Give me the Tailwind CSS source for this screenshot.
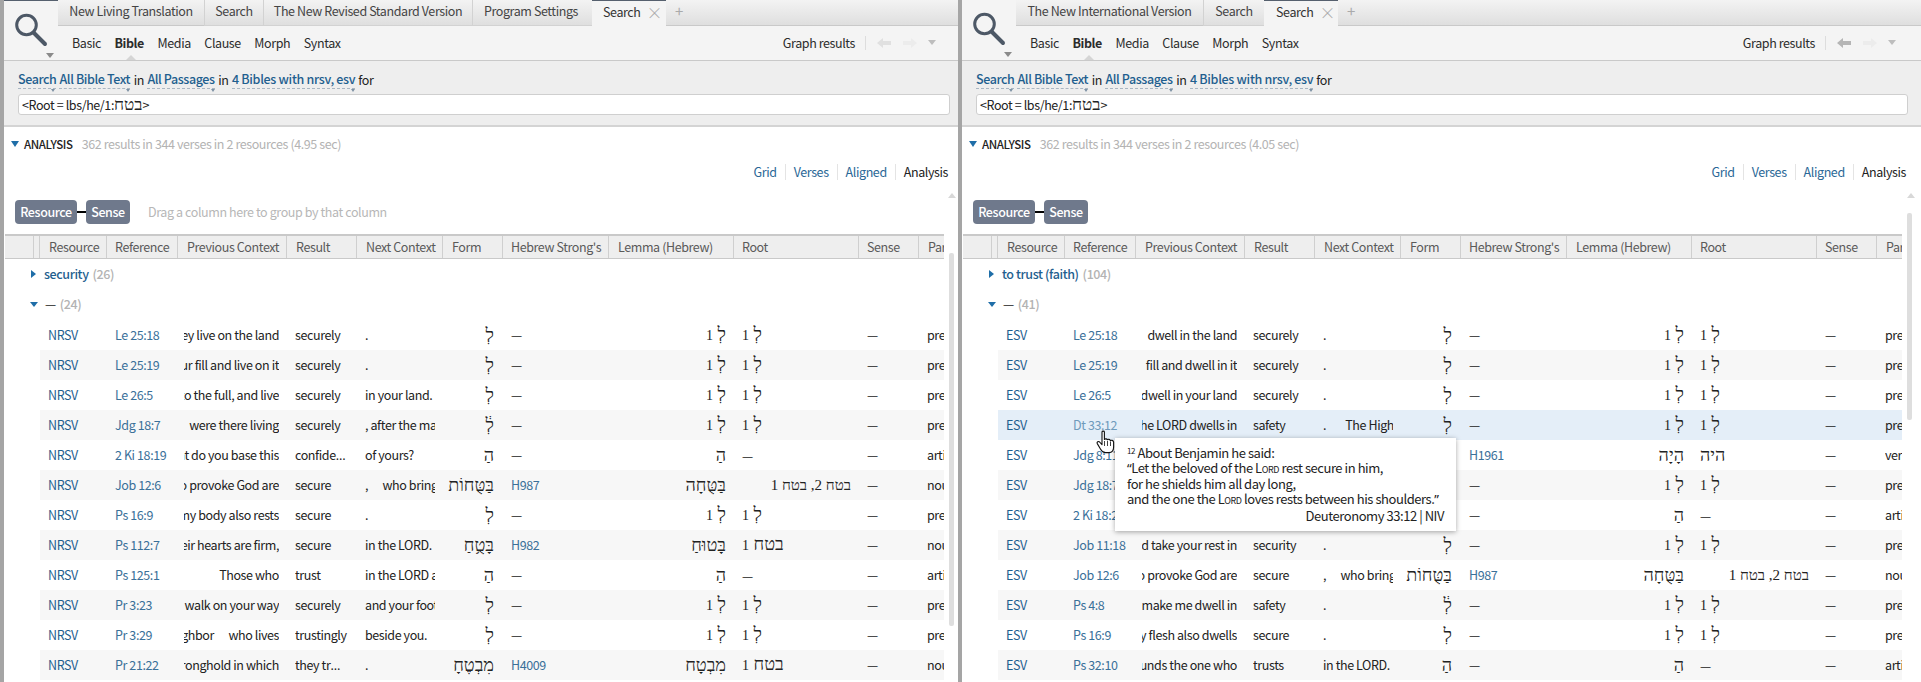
<!DOCTYPE html>
<html lang="en">
<head>
<meta charset="utf-8">
<title>Search</title>
<script src="https://cdn.jsdelivr.net/npm/@tailwindcss/browser@4"></script>
</head>
<body class="m-0 overflow-hidden bg-white font-['Noto_Sans_CJK_SC',sans-serif] text-[12.5px] leading-[18px] tracking-[-0.4px] text-[#222]">
<main class="relative grid h-[682px] w-[1921px] grid-cols-[958px_963px] overflow-hidden">

<!-- LEFT PANEL -->
<section class="relative h-[682px] overflow-hidden border-l-4 border-[#a5a5a5]">
  <header class="flex h-[61px] border-b border-[#c9c9c9] bg-[#f4f4f4]">
    <div class="relative w-[54px] shrink-0 border-t border-[#56606e]">
      <svg class="absolute left-[9px] top-[12px]" width="36" height="34" viewBox="0 0 36 34" fill="none" stroke="#4d5866"><circle cx="13.5" cy="12" r="9.8" stroke-width="3"/><path d="M20.5 19.5 L32 31" stroke-width="4" stroke-linecap="round"/></svg>
      <i class="absolute left-[42px] top-[52px] border-x-[4px] border-t-[5px] border-x-transparent border-t-[#8a8a8a]"></i>
    </div>
    <div class="flex min-w-0 flex-1 flex-col">
      <nav class="flex h-[26px] items-stretch bg-gradient-to-b from-[#f3f3f3] to-[#dedede] text-[#444]">
        <span class="flex w-[146px] items-center justify-center border-b border-[#c9c9c9] pb-[3px]">New Living Translation</span>
        <span class="flex w-[59px] items-center justify-center border-b border-l border-[#d2d2d2] pb-[3px]">Search</span>
        <span class="flex w-[209px] items-center justify-center border-b border-l border-[#d2d2d2] pb-[3px]">The New Revised Standard Version</span>
        <span class="flex w-[120px] items-center justify-center border-b border-l border-[#d2d2d2] pb-[3px] pr-[3px]">Program Settings</span>
        <span class="flex w-[74px] items-center gap-[6px] border-t border-[#56606e] bg-[#f4f4f4] pb-[3px] pl-[11px] text-[#333]">Search <span class="text-[16px] font-light text-[#a9a9a9]">×</span></span>
        <span class="flex flex-1 items-center border-b border-[#c9c9c9] pb-[3px] pl-[9px] text-[15px] text-[#aaa]">+</span>
      </nav>
      <div class="relative flex flex-1 items-center gap-[13.5px] pb-[1px] pl-[14px] pr-[22px] text-[#2c2c2c]">
        <span>Basic</span><span class="font-bold">Bible</span><span>Media</span><span>Clause</span><span>Morph</span><span>Syntax</span>
        <i class="absolute left-[68px] bottom-0 border-x-[5px] border-b-[5px] border-x-transparent border-b-[#d5d5d5]"></i>
        <span class="ml-auto">Graph results</span>
        <span class="ml-[-4px] h-[14px] border-l border-[#ddd]"></span>
        <svg class="ml-[-2px]" width="14" height="10" viewBox="0 0 14 10" fill="#e0e0e0"><path d="M0 5 L6 0 V3 H14 V7 H6 V10 Z"/></svg>
        <svg class="ml-[-2px]" width="14" height="10" viewBox="0 0 14 10" fill="#ececec"><path d="M14 5 L8 0 V3 H0 V7 H8 V10 Z"/></svg>
        <i class="ml-[-2px] border-x-[4px] border-t-[5px] border-x-transparent border-t-[#bdbdbd]"></i>
      </div>
    </div>
  </header>
  <div class="h-[66px] border-b-[2px] border-[#d4d4d4] bg-[#eeeeee] pl-[14px] pr-[8px]">
    <p class="flex h-[33px] items-end pb-[5px] text-[#222]">
      <a class="relative mr-[3px] border-b border-dashed border-[#a9b6c2] font-medium text-[#1f5f8f]">Search<i class="absolute -bottom-[4px] right-[1px] border-x-[2px] border-t-[3px] border-x-transparent border-t-[#7f93a5]"></i></a>
      <a class="relative border-b border-dashed border-[#a9b6c2] font-medium text-[#1f5f8f]">All Bible Text<i class="absolute -bottom-[4px] right-0 border-x-[2px] border-t-[3px] border-x-transparent border-t-[#7f93a5]"></i></a>
      <span class="mx-[3.5px]">in</span>
      <a class="relative border-b border-dashed border-[#a9b6c2] font-medium text-[#1f5f8f]">All Passages<i class="absolute -bottom-[4px] right-0 border-x-[2px] border-t-[3px] border-x-transparent border-t-[#7f93a5]"></i></a>
      <span class="mx-[3.5px]">in</span>
      <a class="relative border-b border-dashed border-[#a9b6c2] font-medium tracking-[-0.3px] text-[#1f5f8f]">4 Bibles with nrsv, esv<i class="absolute -bottom-[4px] right-0 border-x-[2px] border-t-[3px] border-x-transparent border-t-[#7f93a5]"></i></a>
      <span class="ml-[3px]">for</span>
    </p>
    <div class="flex h-[21px] items-center rounded-[3px] border border-[#cfcfcf] bg-white pl-[3px] text-[#222]">&lt;Root = lbs/he/1:<span class="font-['Liberation_Serif'] text-[17px] tracking-normal">בטח</span>&gt;</div>
  </div>
  <div class="flex h-[34px] items-center pl-[7px]">
    <i class="mr-[5px] border-x-[4px] border-t-[6px] border-x-transparent border-t-[#1f6ea8]"></i>
    <span class="text-[11.5px] font-medium">ANALYSIS</span>
    <span class="ml-[9px] text-[#b3b3b3]">362 results in 344 verses in 2 resources (4.95 sec)</span>
  </div>
  <div class="flex h-[22px] items-center justify-end gap-[8px] pr-[10px] text-[#2a6796]">
    <span>Grid</span><span class="h-[16px] border-l border-[#e4e4e4]"></span><span>Verses</span><span class="h-[16px] border-l border-[#e4e4e4]"></span><span>Aligned</span><span class="h-[16px] border-l border-[#e4e4e4]"></span><span class="text-[#222]">Analysis</span>
  </div>
  <div class="flex h-[51px] items-start pl-[11px] pt-[17px]">
    <span class="flex h-[24px] w-[62px] items-center justify-center rounded-[4px] bg-[#6f798c] font-medium text-white">Resource</span>
    <span class="mt-[11px] h-[2px] w-[9px] bg-black"></span>
    <span class="flex h-[24px] w-[44px] items-center justify-center rounded-[4px] bg-[#6f798c] font-medium text-white">Sense</span>
    <span class="ml-[18px] mt-[3px] text-[#b7b7b7]">Drag a column here to group by that column</span>
  </div>
  <div class="ml-px flex h-[25px] w-[939px] items-stretch border-t-[2px] border-b border-[#c9c9c9] bg-[#eeeeee] leading-[22px] text-[#5a5a5a]">
    <span class="w-[29px] border-r border-[#cfcfcf]"></span>
    <span class="w-[6px] border-r border-[#cfcfcf]"></span>
    <span class="w-[67px] border-r border-[#cfcfcf] pl-[9px]">Resource</span>
    <span class="w-[71px] border-r border-[#cfcfcf] pl-[8px]">Reference</span>
    <span class="w-[109px] border-r border-[#cfcfcf] pl-[9px]">Previous Context</span>
    <span class="w-[70px] border-r border-[#cfcfcf] pl-[9px]">Result</span>
    <span class="w-[86px] border-r border-[#cfcfcf] pl-[9px]">Next Context</span>
    <span class="w-[60px] border-r border-[#cfcfcf] pl-[9px]">Form</span>
    <span class="w-[106px] border-r border-[#cfcfcf] pl-[8px]">Hebrew Strong's</span>
    <span class="w-[125px] border-r border-[#cfcfcf] pl-[9px]">Lemma (Hebrew)</span>
    <span class="w-[125px] border-r border-[#cfcfcf] pl-[8px]">Root</span>
    <span class="w-[60px] border-r border-[#cfcfcf] pl-[8px]">Sense</span>
    <span class="w-[25px] overflow-hidden whitespace-nowrap pl-[9px]">Part</span>
  </div>
  <div class="flex h-[31px] items-center pb-[2px] pl-[27px]"><i class="mr-[8px] border-y-[4px] border-l-[5px] border-y-transparent border-l-[#1f6ea8]"></i><b class="font-medium text-[#1f5f8f]">security</b><span class="ml-[4px] font-medium text-[#b3b3b3]">(26)</span></div>
  <div class="flex h-[30px] items-center pb-[2px] pl-[26px]"><i class="mr-[7px] border-x-[4px] border-t-[5px] border-x-transparent border-t-[#1f6ea8]"></i><span>—</span><span class="ml-[4px] font-medium text-[#b3b3b3]">(24)</span></div>
  <div class="ml-[36px] w-[904px] [&>div]:grid [&>div]:h-[30px] [&>div]:grid-cols-[67px_71px_109px_70px_86px_60px_106px_125px_125px_60px_25px] [&>div]:items-center [&>div:nth-child(even)]:bg-[#f7f7f7] [&>div>div]:overflow-hidden [&>div>div]:whitespace-pre [&>div>div]:leading-[30px] [&>div>div]:ml-[8px] [&>div>div:nth-child(1)]:text-[#1f5f8f] [&>div>div:nth-child(2)]:text-[#3a7099] [&>div>div:nth-child(3)]:flex [&>div>div:nth-child(3)]:justify-end [&>div>div:nth-child(3)]:ml-[6px] [&>div>div:nth-child(3)]:mr-[8px] [&>div>div:nth-child(5)]:mr-[8px] [&>div>div:nth-child(6)]:ml-0 [&>div>div:nth-child(6)]:mr-[9px] [&>div>div:nth-child(6)]:font-['Liberation_Serif'] [&>div>div:nth-child(6)]:text-[18px] [&>div>div:nth-child(6)]:tracking-normal [&>div>div:nth-child(6)]:[direction:rtl] [&>div>div:nth-child(8)]:ml-0 [&>div>div:nth-child(8)]:mr-[8px] [&>div>div:nth-child(8)]:font-['Liberation_Serif'] [&>div>div:nth-child(8)]:text-[18px] [&>div>div:nth-child(8)]:tracking-normal [&>div>div:nth-child(8)]:[direction:rtl] [&>div>div:nth-child(9)]:mr-[8px] [&>div>div:nth-child(9)]:font-['Liberation_Serif'] [&>div>div:nth-child(9)]:text-[18px] [&>div>div:nth-child(9)]:tracking-normal [&>div>div:nth-child(9)]:text-left [&>div>div:nth-child(9)]:[direction:rtl]">
    <div><div>NRSV</div><div>Le 25:18</div><div>they live on the land</div><div>securely</div><div>.</div><div>לְ</div><div>—</div><div>לְ <small class="text-[14px]">1</small></div><div>לְ <small class="text-[14px]">1</small></div><div>—</div><div>preposition</div></div>
    <div><div>NRSV</div><div>Le 25:19</div><div>your fill and live on it</div><div>securely</div><div>.</div><div>לְ</div><div>—</div><div>לְ <small class="text-[14px]">1</small></div><div>לְ <small class="text-[14px]">1</small></div><div>—</div><div>preposition</div></div>
    <div><div>NRSV</div><div>Le 26:5</div><div>to the full, and live</div><div>securely</div><div>in your land.</div><div>לְ</div><div>—</div><div>לְ <small class="text-[14px]">1</small></div><div>לְ <small class="text-[14px]">1</small></div><div>—</div><div>preposition</div></div>
    <div><div>NRSV</div><div>Jdg 18:7</div><div>were there living</div><div>securely</div><div>, after the manner</div><div>לְ֔</div><div>—</div><div>לְ <small class="text-[14px]">1</small></div><div>לְ <small class="text-[14px]">1</small></div><div>—</div><div>preposition</div></div>
    <div><div>NRSV</div><div>2 Ki 18:19</div><div>what do you base this</div><div>confide<span class="font-['Noto_Sans']">…</span></div><div>of yours?</div><div>הַ</div><div>—</div><div>הַ</div><div><span class="font-['Noto_Sans_CJK_SC'] text-[12.5px]">—</span></div><div>—</div><div>article</div></div>
    <div><div>NRSV</div><div>Job 12:6</div><div>who provoke God are</div><div>secure</div><div>,      who bring</div><div>בַּטֻּחוֹת</div><div class="text-[#3a7099]">H987</div><div>בַּטֻּחָה</div><div class="!text-right !text-[15px]">בטח 2, בטח 1</div><div>—</div><div>noun</div></div>
    <div><div>NRSV</div><div>Ps 16:9</div><div>my body also rests</div><div>secure</div><div>.</div><div>לְ</div><div>—</div><div>לְ <small class="text-[14px]">1</small></div><div>לְ <small class="text-[14px]">1</small></div><div>—</div><div>preposition</div></div>
    <div><div>NRSV</div><div>Ps 112:7</div><div>their hearts are firm,</div><div>secure</div><div>in the LORD.</div><div>בָּטֻ֥חַ</div><div class="text-[#3a7099]">H982</div><div>בָּטוּחַ</div><div>בטח <small class="text-[14px]">1</small></div><div>—</div><div>noun</div></div>
    <div><div>NRSV</div><div>Ps 125:1</div><div>Those who</div><div>trust</div><div>in the LORD are</div><div>הַ</div><div>—</div><div>הַ</div><div><span class="font-['Noto_Sans_CJK_SC'] text-[12.5px]">—</span></div><div>—</div><div>article</div></div>
    <div><div>NRSV</div><div>Pr 3:23</div><div>walk on your way</div><div>securely</div><div>and your foot</div><div>לְ</div><div>—</div><div>לְ <small class="text-[14px]">1</small></div><div>לְ <small class="text-[14px]">1</small></div><div>—</div><div>preposition</div></div>
    <div><div>NRSV</div><div>Pr 3:29</div><div>neighbor      who lives</div><div>trustingly</div><div>beside you.</div><div>לְ</div><div>—</div><div>לְ <small class="text-[14px]">1</small></div><div>לְ <small class="text-[14px]">1</small></div><div>—</div><div>preposition</div></div>
    <div><div>NRSV</div><div>Pr 21:22</div><div>the stronghold in which</div><div>they tr<span class="font-['Noto_Sans']">…</span></div><div>.</div><div>מִבְטֶחָ</div><div class="text-[#3a7099]">H4009</div><div>מִבְטָח</div><div>בטח <small class="text-[14px]">1</small></div><div>—</div><div>noun</div></div>
  </div>
  <i class="absolute left-[944px] top-[193px] border-x-[4px] border-b-[5px] border-x-transparent border-b-[#d8d8d8]"></i>
  <span class="absolute left-[945px] top-[253px] h-[373px] w-[5px] rounded-[2px] bg-[#dedede]"></span>
</section>

<!-- RIGHT PANEL -->
<section class="relative h-[682px] overflow-hidden border-l-4 border-[#a5a5a5]">
  <header class="flex h-[61px] border-b border-[#c9c9c9] bg-[#f4f4f4]">
    <div class="relative w-[54px] shrink-0">
      <svg class="absolute left-[9px] top-[12px]" width="36" height="34" viewBox="0 0 36 34" fill="none" stroke="#4d5866"><circle cx="13.5" cy="12" r="9.8" stroke-width="3"/><path d="M20.5 19.5 L32 31" stroke-width="4" stroke-linecap="round"/></svg>
      <i class="absolute left-[42px] top-[52px] border-x-[4px] border-t-[5px] border-x-transparent border-t-[#8a8a8a]"></i>
    </div>
    <div class="flex min-w-0 flex-1 flex-col">
      <nav class="flex h-[26px] items-stretch bg-gradient-to-b from-[#f3f3f3] to-[#dedede] text-[#444]">
        <span class="flex w-[187px] items-center justify-center border-b border-[#c9c9c9] pb-[3px]">The New International Version</span>
        <span class="flex w-[61px] items-center justify-center border-b border-l border-[#d2d2d2] pb-[3px]">Search</span>
        <span class="flex w-[74px] items-center gap-[6px] border-t border-[#56606e] bg-[#f4f4f4] pb-[3px] pl-[12px] text-[#333]">Search <span class="text-[16px] font-light text-[#a9a9a9]">×</span></span>
        <span class="flex flex-1 items-center border-b border-[#c9c9c9] pb-[3px] pl-[9px] text-[15px] text-[#aaa]">+</span>
      </nav>
      <div class="relative flex flex-1 items-center gap-[13.5px] pb-[1px] pl-[14px] pr-[25px] text-[#2c2c2c]">
        <span>Basic</span><span class="font-bold">Bible</span><span>Media</span><span>Clause</span><span>Morph</span><span>Syntax</span>
        <i class="absolute left-[68px] bottom-0 border-x-[5px] border-b-[5px] border-x-transparent border-b-[#d5d5d5]"></i>
        <span class="ml-auto">Graph results</span>
        <span class="ml-[-4px] h-[14px] border-l border-[#ddd]"></span>
        <svg class="ml-[-2px]" width="14" height="10" viewBox="0 0 14 10" fill="#b5b5b5"><path d="M0 5 L6 0 V3 H14 V7 H6 V10 Z"/></svg>
        <svg class="ml-[-2px]" width="14" height="10" viewBox="0 0 14 10" fill="#ececec"><path d="M14 5 L8 0 V3 H0 V7 H8 V10 Z"/></svg>
        <i class="ml-[-2px] border-x-[4px] border-t-[5px] border-x-transparent border-t-[#bdbdbd]"></i>
      </div>
    </div>
  </header>
  <div class="h-[66px] border-b-[2px] border-[#d4d4d4] bg-[#eeeeee] pl-[14px] pr-[13px]">
    <p class="flex h-[33px] items-end pb-[5px] text-[#222]">
      <a class="relative mr-[3px] border-b border-dashed border-[#a9b6c2] font-medium text-[#1f5f8f]">Search<i class="absolute -bottom-[4px] right-[1px] border-x-[2px] border-t-[3px] border-x-transparent border-t-[#7f93a5]"></i></a>
      <a class="relative border-b border-dashed border-[#a9b6c2] font-medium text-[#1f5f8f]">All Bible Text<i class="absolute -bottom-[4px] right-0 border-x-[2px] border-t-[3px] border-x-transparent border-t-[#7f93a5]"></i></a>
      <span class="mx-[3.5px]">in</span>
      <a class="relative border-b border-dashed border-[#a9b6c2] font-medium text-[#1f5f8f]">All Passages<i class="absolute -bottom-[4px] right-0 border-x-[2px] border-t-[3px] border-x-transparent border-t-[#7f93a5]"></i></a>
      <span class="mx-[3.5px]">in</span>
      <a class="relative border-b border-dashed border-[#a9b6c2] font-medium tracking-[-0.3px] text-[#1f5f8f]">4 Bibles with nrsv, esv<i class="absolute -bottom-[4px] right-0 border-x-[2px] border-t-[3px] border-x-transparent border-t-[#7f93a5]"></i></a>
      <span class="ml-[3px]">for</span>
    </p>
    <div class="flex h-[21px] items-center rounded-[3px] border border-[#cfcfcf] bg-white pl-[3px] text-[#222]">&lt;Root = lbs/he/1:<span class="font-['Liberation_Serif'] text-[17px] tracking-normal">בטח</span>&gt;</div>
  </div>
  <div class="flex h-[34px] items-center pl-[7px]">
    <i class="mr-[5px] border-x-[4px] border-t-[6px] border-x-transparent border-t-[#1f6ea8]"></i>
    <span class="text-[11.5px] font-medium">ANALYSIS</span>
    <span class="ml-[9px] text-[#b3b3b3]">362 results in 344 verses in 2 resources (4.05 sec)</span>
  </div>
  <div class="flex h-[22px] items-center justify-end gap-[8px] pr-[15px] text-[#2a6796]">
    <span>Grid</span><span class="h-[16px] border-l border-[#e4e4e4]"></span><span>Verses</span><span class="h-[16px] border-l border-[#e4e4e4]"></span><span>Aligned</span><span class="h-[16px] border-l border-[#e4e4e4]"></span><span class="text-[#222]">Analysis</span>
  </div>
  <div class="flex h-[51px] items-start pl-[11px] pt-[17px]">
    <span class="flex h-[24px] w-[62px] items-center justify-center rounded-[4px] bg-[#6f798c] font-medium text-white">Resource</span>
    <span class="mt-[11px] h-[2px] w-[9px] bg-black"></span>
    <span class="flex h-[24px] w-[44px] items-center justify-center rounded-[4px] bg-[#6f798c] font-medium text-white">Sense</span>
  </div>
  <div class="ml-px flex h-[25px] w-[939px] items-stretch border-t-[2px] border-b border-[#c9c9c9] bg-[#eeeeee] leading-[22px] text-[#5a5a5a]">
    <span class="w-[29px] border-r border-[#cfcfcf]"></span>
    <span class="w-[6px] border-r border-[#cfcfcf]"></span>
    <span class="w-[67px] border-r border-[#cfcfcf] pl-[9px]">Resource</span>
    <span class="w-[71px] border-r border-[#cfcfcf] pl-[8px]">Reference</span>
    <span class="w-[109px] border-r border-[#cfcfcf] pl-[9px]">Previous Context</span>
    <span class="w-[70px] border-r border-[#cfcfcf] pl-[9px]">Result</span>
    <span class="w-[86px] border-r border-[#cfcfcf] pl-[9px]">Next Context</span>
    <span class="w-[60px] border-r border-[#cfcfcf] pl-[9px]">Form</span>
    <span class="w-[106px] border-r border-[#cfcfcf] pl-[8px]">Hebrew Strong's</span>
    <span class="w-[125px] border-r border-[#cfcfcf] pl-[9px]">Lemma (Hebrew)</span>
    <span class="w-[125px] border-r border-[#cfcfcf] pl-[8px]">Root</span>
    <span class="w-[60px] border-r border-[#cfcfcf] pl-[8px]">Sense</span>
    <span class="w-[25px] overflow-hidden whitespace-nowrap pl-[9px]">Part</span>
  </div>
  <div class="flex h-[31px] items-center pb-[2px] pl-[27px]"><i class="mr-[8px] border-y-[4px] border-l-[5px] border-y-transparent border-l-[#1f6ea8]"></i><b class="font-medium text-[#1f5f8f]">to trust (faith)</b><span class="ml-[4px] font-medium text-[#b3b3b3]">(104)</span></div>
  <div class="flex h-[30px] items-center pb-[2px] pl-[26px]"><i class="mr-[7px] border-x-[4px] border-t-[5px] border-x-transparent border-t-[#1f6ea8]"></i><span>—</span><span class="ml-[4px] font-medium text-[#b3b3b3]">(41)</span></div>
  <div class="ml-[36px] w-[904px] [&>div]:grid [&>div]:h-[30px] [&>div]:grid-cols-[67px_71px_109px_70px_86px_60px_106px_125px_125px_60px_25px] [&>div]:items-center [&>div:nth-child(even)]:bg-[#f7f7f7] [&>div>div]:overflow-hidden [&>div>div]:whitespace-pre [&>div>div]:leading-[30px] [&>div>div]:ml-[8px] [&>div>div:nth-child(1)]:text-[#1f5f8f] [&>div>div:nth-child(2)]:text-[#3a7099] [&>div>div:nth-child(3)]:flex [&>div>div:nth-child(3)]:justify-end [&>div>div:nth-child(3)]:ml-[6px] [&>div>div:nth-child(3)]:mr-[8px] [&>div>div:nth-child(5)]:mr-[8px] [&>div>div:nth-child(6)]:ml-0 [&>div>div:nth-child(6)]:mr-[9px] [&>div>div:nth-child(6)]:font-['Liberation_Serif'] [&>div>div:nth-child(6)]:text-[18px] [&>div>div:nth-child(6)]:tracking-normal [&>div>div:nth-child(6)]:[direction:rtl] [&>div>div:nth-child(8)]:ml-0 [&>div>div:nth-child(8)]:mr-[8px] [&>div>div:nth-child(8)]:font-['Liberation_Serif'] [&>div>div:nth-child(8)]:text-[18px] [&>div>div:nth-child(8)]:tracking-normal [&>div>div:nth-child(8)]:[direction:rtl] [&>div>div:nth-child(9)]:mr-[8px] [&>div>div:nth-child(9)]:font-['Liberation_Serif'] [&>div>div:nth-child(9)]:text-[18px] [&>div>div:nth-child(9)]:tracking-normal [&>div>div:nth-child(9)]:text-left [&>div>div:nth-child(9)]:[direction:rtl]">
    <div><div>ESV</div><div>Le 25:18</div><div>dwell in the land</div><div>securely</div><div>.</div><div>לְ</div><div>—</div><div>לְ <small class="text-[14px]">1</small></div><div>לְ <small class="text-[14px]">1</small></div><div>—</div><div>preposition</div></div>
    <div><div>ESV</div><div>Le 25:19</div><div>fill and dwell in it</div><div>securely</div><div>.</div><div>לְ</div><div>—</div><div>לְ <small class="text-[14px]">1</small></div><div>לְ <small class="text-[14px]">1</small></div><div>—</div><div>preposition</div></div>
    <div><div>ESV</div><div>Le 26:5</div><div>and dwell in your land</div><div>securely</div><div>.</div><div>לְ</div><div>—</div><div>לְ <small class="text-[14px]">1</small></div><div>לְ <small class="text-[14px]">1</small></div><div>—</div><div>preposition</div></div>
    <div class="!bg-[#e4eef8]"><div>ESV</div><div class="!text-[#6f9abb]">Dt 33:12</div><div>the LORD dwells in</div><div>safety</div><div>.        The High</div><div>לְ</div><div>—</div><div>לְ <small class="text-[14px]">1</small></div><div>לְ <small class="text-[14px]">1</small></div><div>—</div><div>preposition</div></div>
    <div><div>ESV</div><div>Jdg 8:11</div><div></div><div></div><div></div><div></div><div class="text-[#3a7099]">H1961</div><div>הָיָה</div><div>היה</div><div>—</div><div>verb</div></div>
    <div><div>ESV</div><div>Jdg 18:7</div><div></div><div></div><div></div><div></div><div>—</div><div>לְ <small class="text-[14px]">1</small></div><div>לְ <small class="text-[14px]">1</small></div><div>—</div><div>preposition</div></div>
    <div><div>ESV</div><div>2 Ki 18:20</div><div></div><div></div><div></div><div></div><div>—</div><div>הַ</div><div><span class="font-['Noto_Sans_CJK_SC'] text-[12.5px]">—</span></div><div>—</div><div>article</div></div>
    <div><div>ESV</div><div>Job 11:18</div><div>and take your rest in</div><div>security</div><div>.</div><div>לְ</div><div>—</div><div>לְ <small class="text-[14px]">1</small></div><div>לְ <small class="text-[14px]">1</small></div><div>—</div><div>preposition</div></div>
    <div><div>ESV</div><div>Job 12:6</div><div>who provoke God are</div><div>secure</div><div>,      who bring</div><div>בַּטֻּחוֹת</div><div class="text-[#3a7099]">H987</div><div>בַּטֻּחָה</div><div class="!text-right !text-[15px]">בטח 2, בטח 1</div><div>—</div><div>noun</div></div>
    <div><div>ESV</div><div>Ps 4:8</div><div>make me dwell in</div><div>safety</div><div>.</div><div>לְ֔</div><div>—</div><div>לְ <small class="text-[14px]">1</small></div><div>לְ <small class="text-[14px]">1</small></div><div>—</div><div>preposition</div></div>
    <div><div>ESV</div><div>Ps 16:9</div><div>my flesh also dwells</div><div>secure</div><div>.</div><div>לְ</div><div>—</div><div>לְ <small class="text-[14px]">1</small></div><div>לְ <small class="text-[14px]">1</small></div><div>—</div><div>preposition</div></div>
    <div><div>ESV</div><div>Ps 32:10</div><div>surrounds the one who</div><div>trusts</div><div>in the LORD.</div><div>הַ</div><div>—</div><div>הַ</div><div><span class="font-['Noto_Sans_CJK_SC'] text-[12.5px]">—</span></div><div>—</div><div>article</div></div>
  </div>
  <i class="absolute left-[945px] top-[193px] border-x-[4px] border-b-[5px] border-x-transparent border-b-[#d8d8d8]"></i>
  <span class="absolute left-[945px] top-[213px] h-[207px] w-[5px] rounded-[2px] bg-[#dedede]"></span>
  <div class="absolute left-[153px] top-[438px] h-[93px] w-[341px] bg-white pl-[12px] pr-[12px] pt-[7px] text-[13px] leading-[15px] tracking-[-0.45px] text-[#222] shadow-[0_1px_5px_rgba(0,0,0,0.35)]">
    <p><sup class="text-[8px]">12</sup> About Benjamin he said:</p>
    <p><span class="font-['Noto_Sans']">“</span>Let the beloved of the <span class="[font-variant:small-caps]">Lord</span> rest secure in him,</p>
    <p>for he shields him all day long,</p>
    <p>and the one the <span class="[font-variant:small-caps]">Lord</span> loves rests between his shoulders.<span class="font-['Noto_Sans']">”</span></p>
    <p class="mt-px text-right">Deuteronomy 33:12 | NIV</p>
  </div>
  <svg class="absolute left-[134px] top-[430px]" width="20" height="24" viewBox="0 0 20 24"><path d="M6 2 C6 .8 8.4 .8 8.4 2 V9.5 C9 8.6 11 8.6 11.4 9.8 C12 9 14 9.2 14.4 10.6 C15 10 17.4 10.2 17.6 12 V17 C17.6 20 16 22.6 13 22.6 H9.5 C7 22.6 5.8 21.4 4.6 19.2 L1.3 13.6 C.5 12 2.4 10.8 3.6 12 L6 14.6 Z" fill="#fff" stroke="#111" stroke-width="1.1" stroke-linejoin="round"/><path d="M8.5 11 V16 M11.5 11 V16 M14.5 11.5 V16" stroke="#111" stroke-width=".8" fill="none"/></svg>
</section>
</main>
</body>
</html>
